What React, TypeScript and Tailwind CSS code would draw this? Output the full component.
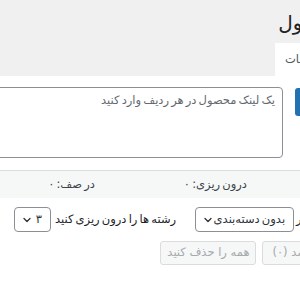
import React from 'react';

const Chevron = () => (
  <svg width="10" height="10" viewBox="0 0 20 20" className="shrink-0">
    <path d="M4 7l6 6 6-6" fill="none" stroke="#2c3338" strokeWidth="2.6" strokeLinecap="round" strokeLinejoin="round" />
  </svg>
);

const FakeSelect = ({ value, width }: { value: string; width: string }) => (
  <div
    className={`${width} h-[25px] shrink-0 flex items-center justify-between pr-[8px] pl-[7px] bg-white border border-[#8c8f94] rounded-[4px] text-[#2c3338]`}
  >
    <span className="whitespace-nowrap">{value}</span>
    <Chevron />
  </div>
);

const App = () => {
  return (
    <div
      dir="rtl"
      className="w-[300px] h-[300px] overflow-hidden bg-[#f0f0f0] text-[11.5px] [word-spacing:-1.5px] text-[#1d2327] font-['DejaVu_Sans',sans-serif]"
    >
      <div className="-mr-[40px]">
        <h1 className="pt-[10px] -mr-[4px] text-[20px] leading-[26px] font-normal whitespace-nowrap">محصول</h1>

        <div className="mt-[7px] flex">
          <div className="w-[65px] h-[33px] pl-[10px] flex items-center justify-end bg-white text-[#50575e] whitespace-nowrap">تنظیمات</div>
        </div>

        <div className="-ml-[20px] bg-white pt-[11px] pb-[40px]">
          <div className="flex items-start gap-[12px]">
            <button className="w-[45px] h-[28px] mt-[1px] rounded-[3px] bg-[#2271b1] text-white">ثبت</button>
            <textarea
              className="flex-1 h-[71px] px-[7px] py-[4px] border border-[#8c8f94] rounded-[4px] bg-white resize-none [word-spacing:-1.5px] placeholder:text-[#646970] outline-none"
              placeholder="یک لینک محصول در هر ردیف وارد کنید"
            />
          </div>

          <div className="mt-[12px] h-[28px] flex items-center gap-[89px] pr-[93px] bg-[#f6f7f7] border-t border-[#dcdcde] text-[#3c434a] whitespace-nowrap">
            <span>درون ریزی: ۰</span>
            <span>در صف: ۰</span>
          </div>

          <div className="mt-[9px] flex items-center pr-[3px] whitespace-nowrap">
            <span className="ml-[2px]">ذخیره در</span>
            <FakeSelect value="بدون دسته‌بندی" width="w-[99px]" />
            <span className="mr-[19px] ml-[4px]">رشته ها را درون ریزی کنید</span>
            <FakeSelect value="۳" width="w-[37px]" />
          </div>

          <div className="mt-[9px] flex items-center gap-[6px] -mr-[33px] whitespace-nowrap">
            <button className="h-[24px] px-[9px] rounded-[3px] border border-[#dcdcde] bg-[#f6f7f7] text-[#a7aaad]">درون ریزی شد (۰)</button>
            <button className="h-[24px] w-[96px] rounded-[3px] border border-[#dcdcde] bg-[#f6f7f7] text-[#a7aaad]">همه را حذف کنید</button>
          </div>
        </div>
      </div>
    </div>
  );
};

export default App;
